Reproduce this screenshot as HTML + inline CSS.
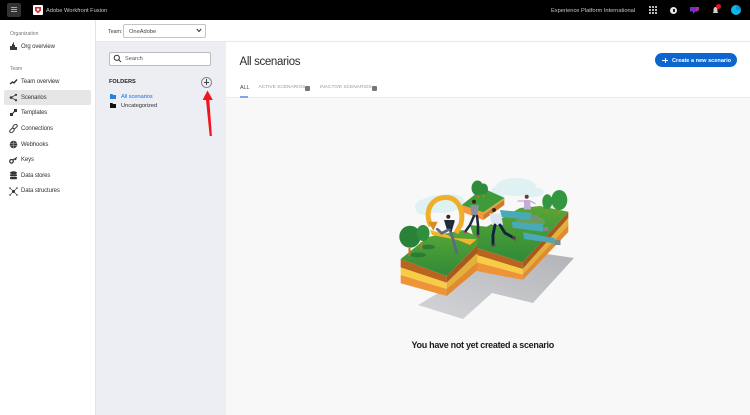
<!DOCTYPE html>
<html>
<head>
<meta charset="utf-8">
<style>
html,body{margin:0;padding:0;background:#fff;}
body{width:750px;height:415px;position:relative;overflow:hidden;font-family:"Liberation Sans",sans-serif;color:#2c2c2c;}
div,span,svg{position:absolute;}
#w{left:0;top:0;width:750px;height:415px;background:#fff;filter:blur(.3px);overflow:hidden;}
.t{white-space:nowrap;line-height:10px;margin-top:1px;}
.n{font-size:6px;letter-spacing:-.13px;left:21px;color:#333;}
.i{left:9px;width:9px;height:9px;}
</style>
</head>
<body>
<div id="w">
<!-- regions -->
<div style="left:0;top:0;width:750px;height:20px;background:#000"></div>
<div style="left:95px;top:20px;width:1px;height:395px;background:#e4e4e4"></div>
<div style="left:96px;top:41px;width:654px;height:1px;background:#e8e8e8"></div>
<div style="left:96px;top:42px;width:130px;height:373px;background:#eceef3"></div>
<div style="left:226px;top:42px;width:524px;height:55px;background:#fff"></div>
<div style="left:226px;top:97px;width:524px;height:318px;background:#f8f8f8;border-top:1px solid #ececec"></div>

<!-- top bar -->
<div style="left:7px;top:3px;width:14px;height:14px;background:#333;border-radius:2px"></div>
<div style="left:11px;top:7px;width:6px;height:1px;background:#aaa"></div>
<div style="left:11px;top:9px;width:6px;height:1px;background:#aaa"></div>
<div style="left:11px;top:11px;width:6px;height:1px;background:#aaa"></div>
<div style="left:33px;top:5px;width:10px;height:10px;background:#fff;border-radius:1px"></div>
<svg style="left:34px;top:6px" width="8" height="8" viewBox="0 0 8 8"><path d="M1 1H7V4.500L4 7.500L1 4.500Z" fill="#e3262e"/><path d="M2.800 2.500H5.200V4L4 5.200L2.800 4Z" fill="#fff"/></svg>
<div class="t" style="left:46px;top:5px;font-size:5.700px;color:#c8c8c8">Adobe Workfront Fusion</div>
<div class="t" style="left:551px;top:5px;font-size:5.700px;color:#c8c8c8">Experience Platform International</div>
<svg style="left:649px;top:6px" width="8" height="8" viewBox="0 0 8 8" fill="#bbb"><rect x="0" y="0" width="2" height="2"/><rect x="3" y="0" width="2" height="2"/><rect x="6" y="0" width="2" height="2"/><rect x="0" y="3" width="2" height="2"/><rect x="3" y="3" width="2" height="2"/><rect x="6" y="3" width="2" height="2"/><rect x="0" y="6" width="2" height="2"/><rect x="3" y="6" width="2" height="2"/><rect x="6" y="6" width="2" height="2"/></svg>
<div style="left:670px;top:7px;width:7px;height:7px;background:#e8e8e8;border-radius:50%"></div>
<div style="left:673px;top:9px;width:1.500px;height:3px;background:#222"></div>
<svg style="left:690px;top:6px" width="9" height="9" viewBox="0 0 9 9"><path d="M0 1H6V5L3 8V5.500H0Z" fill="#6a35c8"/><path d="M6 1H9V4L6 6Z" fill="#c02a8c"/></svg>
<svg style="left:712px;top:6px" width="7" height="9" viewBox="0 0 7 9"><path d="M3.500 1C5 1 5.500 2.500 5.500 4V6L6.500 7H.5L1.500 6V4C1.500 2.500 2 1 3.500 1Z" fill="#d0d0d0"/></svg>
<div style="left:716px;top:4px;width:5px;height:5px;background:#e3141e;border-radius:50%"></div>
<div style="left:731px;top:5px;width:10px;height:10px;border-radius:50%;background:#12b5e6"></div>
<div style="left:736px;top:5px;width:5px;height:5px;border-radius:0 5px 0 0;background:#0c96d8"></div>

<!-- team bar -->
<div class="t" style="left:108px;top:26px;font-size:5.500px;letter-spacing:-.15px;color:#444">Team:</div>
<div style="left:123px;top:24px;width:81px;height:12px;border:1px solid #c4c4c4;border-radius:2px;background:#fff"></div>
<div class="t" style="left:129px;top:26px;font-size:5.700px;color:#444">OneAdobe</div>
<svg style="left:196px;top:28px" width="6" height="5" viewBox="0 0 6 5"><path d="M.8 1L3 3.500L5.200 1" fill="none" stroke="#333" stroke-width="1"/></svg>

<!-- left nav -->
<div class="t" style="left:10px;top:28px;font-size:5px;color:#777">Organization</div>
<svg class="i" style="top:42px" viewBox="0 0 9 9"><path d="M1 8V4H3V2H4V0.500H5V3H6V5H8V8Z" fill="#3a3a3a"/></svg>
<div class="t n" style="top:41px">Org overview</div>
<div class="t" style="left:10px;top:63px;font-size:5px;color:#777">Team</div>
<svg class="i" style="top:77px" viewBox="0 0 9 9"><path d="M1 7L3.500 5L5 6L8 2.500" fill="none" stroke="#333" stroke-width="1.400"/></svg>
<div class="t n" style="top:76px">Team overview</div>
<div style="left:4px;top:90px;width:87px;height:15px;background:#e6e6e6;border-radius:2px"></div>
<svg class="i" style="top:93px" viewBox="0 0 9 9"><path d="M2 4.500L7 1.800M2 4.500L7 7.200" stroke="#333" stroke-width=".8" fill="none"/><circle cx="2" cy="4.500" r="1.300" fill="#333"/><circle cx="7" cy="1.800" r="1.100" fill="#333"/><circle cx="7" cy="7.200" r="1.100" fill="#333"/></svg>
<div class="t n" style="top:92px">Scenarios</div>
<svg class="i" style="top:108px" viewBox="0 0 9 9"><rect x="5" y="1" width="3" height="3" fill="#333"/><rect x="1" y="5" width="3" height="3" fill="#333"/><path d="M3 6L6 3" stroke="#333" stroke-width="1.200"/></svg>
<div class="t n" style="top:107px">Templates</div>
<svg class="i" style="top:124px" viewBox="0 0 9 9" fill="none" stroke="#444" stroke-width="1"><rect x="4.500" y="0" width="3" height="5" rx="1.500" transform="rotate(45 6 2.500)"/><rect x="1.500" y="4" width="3" height="5" rx="1.500" transform="rotate(45 3 6.500)"/></svg>
<div class="t n" style="top:123px">Connections</div>
<svg class="i" style="top:140px" viewBox="0 0 9 9"><circle cx="4.500" cy="4.500" r="3.800" fill="#3a3a3a"/><path d="M1 3.200H8M1 5.800H8M4.500 .7V8.300" stroke="#bbb" stroke-width=".5"/></svg>
<div class="t n" style="top:139px">Webhooks</div>
<svg class="i" style="top:155px" viewBox="0 0 9 9"><circle cx="2.500" cy="6.300" r="1.800" fill="none" stroke="#333" stroke-width="1.200"/><path d="M4 5L8 2.500M6 3.800L7 5" stroke="#333" stroke-width="1.200"/></svg>
<div class="t n" style="top:154px">Keys</div>
<svg class="i" style="top:171px" viewBox="0 0 9 9" fill="#333"><ellipse cx="4.500" cy="1.800" rx="3.500" ry="1.500"/><rect x="1" y="3.300" width="7" height="1.800" rx=".8"/><rect x="1" y="5.800" width="7" height="2.400" rx="1"/></svg>
<div class="t n" style="top:170px">Data stores</div>
<svg class="i" style="top:187px" viewBox="0 0 9 9"><path d="M1 1L8 8M8 1L1 8" stroke="#444" stroke-width=".7"/><circle cx="4.500" cy="4.500" r="1.500" fill="#333"/><circle cx="1" cy="1" r=".8" fill="#333"/><circle cx="8" cy="1" r=".8" fill="#333"/><circle cx="1" cy="8" r=".8" fill="#333"/><circle cx="8" cy="8" r=".8" fill="#333"/></svg>
<div class="t n" style="top:185px">Data structures</div>

<!-- folder panel -->
<div style="left:109px;top:52px;width:100px;height:12px;border:1px solid #bcbcbc;border-radius:2px;background:#fff"></div>
<svg style="left:113px;top:54px" width="9" height="9" viewBox="0 0 9 9" fill="none" stroke="#333" stroke-width="1"><circle cx="3.800" cy="3.800" r="2.600"/><path d="M5.700 5.700L8 8"/></svg>
<div class="t" style="left:125px;top:53px;font-size:5.600px;color:#555">Search</div>
<div class="t" style="left:109px;top:76px;font-size:5.600px;font-weight:bold;color:#222">FOLDERS</div>
<div style="left:201px;top:77px;width:9px;height:9px;border:1px solid #888;border-radius:50%;background:#eceef3"></div>
<div style="left:203.500px;top:81.500px;width:5.500px;height:1.200px;background:#444"></div>
<div style="left:205.700px;top:79.300px;width:1.200px;height:5.500px;background:#444"></div>
<svg style="left:110px;top:94px" width="6" height="5" viewBox="0 0 6 5"><path d="M0 0H2.500L3 1H6V5H0Z" fill="#2b7fe0"/></svg>
<div class="t" style="left:121px;top:91px;font-size:5.800px;letter-spacing:-.1px;color:#1473e6">All scenarios</div>
<svg style="left:110px;top:103px" width="6" height="5" viewBox="0 0 6 5"><path d="M0 0H2.500L3 1H6V5H0Z" fill="#111"/></svg>
<div class="t" style="left:121px;top:100px;font-size:5.800px;letter-spacing:-.1px;color:#333">Uncategorized</div>
<!-- red arrow -->
<svg style="left:200px;top:88px" width="18" height="50" viewBox="0 0 18 50"><path d="M7.500 2.500L12.800 12H9.300L11.900 48H9.700L6 12H2.600Z" fill="#f0141e"/></svg>

<!-- main header -->
<div class="t" style="left:239.500px;top:54px;font-size:11.500px;line-height:15px;letter-spacing:-.35px;color:#2c2c2c">All scenarios</div>
<div class="t" style="left:240px;top:82px;font-size:5.300px;color:#444">ALL</div>
<div style="left:240px;top:96px;width:8px;height:1.500px;background:#7fa6ee"></div>
<div class="t" style="left:258.500px;top:82px;font-size:4.800px;color:#999">ACTIVE SCENARIOS</div>
<div style="left:305px;top:85.500px;width:5px;height:5.500px;background:#777;border-radius:1px"></div>
<div class="t" style="left:320px;top:82px;font-size:4.800px;color:#999">INACTIVE SCENARIOS</div>
<div style="left:372px;top:85.500px;width:5px;height:5.500px;background:#777;border-radius:1px"></div>

<!-- CTA -->
<div style="left:654.500px;top:53px;width:82px;height:14px;background:#0d66d0;border-radius:7px"></div>
<div style="left:662px;top:59.500px;width:6px;height:1px;background:#fff"></div>
<div style="left:664.500px;top:57.500px;width:1px;height:5px;background:#fff"></div>
<div class="t" style="left:672px;top:55px;font-size:5.600px;font-weight:bold;color:#fff">Create a new scenario</div>

<!-- illustration in page coordinates -->
<svg style="left:390px;top:170px" width="200" height="160" viewBox="390 170 200 160">
<defs>
<linearGradient id="s" x1="0" y1="1" x2="1" y2="0"><stop offset="0" stop-color="#d4d5d8"/><stop offset="1" stop-color="#b3b4b8"/></linearGradient>
<linearGradient id="g" x1="0" y1="0" x2="0" y2="1"><stop offset="0" stop-color="#58a636"/><stop offset="1" stop-color="#2f8a38"/></linearGradient>
</defs>
<!-- shadow -->
<path d="M418 305L463 319L492 293L533 303L574 258L547 254L522 280L477 270Z" fill="url(#s)"/>
<!-- clouds -->
<g fill="#dff1f3">
<ellipse cx="441" cy="204" rx="20" ry="9"/><ellipse cx="427" cy="206" rx="12" ry="7"/><ellipse cx="450" cy="201" rx="14" ry="7"/><ellipse cx="425" cy="210" rx="9" ry="5"/>
<ellipse cx="516" cy="187" rx="20" ry="9"/><ellipse cx="532" cy="192" rx="12" ry="5"/><ellipse cx="500" cy="191" rx="9" ry="5"/>
</g>
<!-- back block -->
<path d="M461.700 205L483.300 212.300V220L461.700 211.700Z" fill="#f29a3c"/>
<path d="M483.300 212.300L504.300 197.700V205L483.300 220Z" fill="#cf7a2a"/>
<path d="M483.300 212.300L504.300 197.700V200L483.300 215Z" fill="#d9a94a"/>
<path d="M461.700 205L483 188.300L504.300 197.700L483.300 212.300Z" fill="#3f9a3a"/>
<rect x="477.500" y="193" width="1.500" height="5" fill="#c9741f"/><rect x="483" y="193" width="1.300" height="4" fill="#c9741f"/>
<ellipse cx="477.500" cy="188" rx="6" ry="7.500" fill="#2f8a3c"/><ellipse cx="483.500" cy="189" rx="4.500" ry="5.500" fill="#2f8a3c"/>
<!-- right block faces -->
<path d="M476.700 247.700L522.700 262.300V269L476.700 255Z" fill="#b9651f"/>
<path d="M476.700 255L522.700 269V274.500L476.700 262.300Z" fill="#f9cc45"/>
<path d="M476.700 262.300L522.700 274.500V280L476.700 271Z" fill="#ee9338"/>
<path d="M522.700 262.300L568.300 211.700V218L522.700 269Z" fill="#a85a1e"/>
<path d="M522.700 269L568.300 218V225L522.700 274.500Z" fill="#e3b13a"/>
<path d="M522.700 274.500L568.300 225V232L522.700 280Z" fill="#e28a30"/>
<!-- right block top -->
<path d="M476.700 247.700L522.700 262.300L568.300 211.700L540 206L520 208L486.700 226.700L470 225Z" fill="url(#g)"/>
<!-- left block faces -->
<path d="M400.700 259L446.700 276V282.700L400.700 267.500Z" fill="#b9651f"/>
<path d="M400.700 267.500L446.700 282.700V289L400.700 275Z" fill="#f9cc45"/>
<path d="M400.700 275L446.700 289V296L400.700 283.300Z" fill="#ee9338"/>
<path d="M446.700 276L477.300 245V253L446.700 282.700Z" fill="#a85a1e"/>
<path d="M446.700 282.700L477.300 253V262L446.700 289Z" fill="#e3b13a"/>
<path d="M446.700 289L477.300 262V270L446.700 296Z" fill="#e28a30"/>
<!-- left block top -->
<path d="M400.700 259L428 237L463 230L478 237L477.300 245L446.700 276Z" fill="url(#g)"/>
<!-- trees left -->
<ellipse cx="418" cy="255" rx="8" ry="2.500" fill="#2a7d35"/><ellipse cx="428" cy="247" rx="7" ry="2.300" fill="#2a7d35"/>
<rect x="408.500" y="248" width="2" height="8" fill="#c9741f"/><rect x="420.500" y="242" width="1.700" height="7" fill="#c9741f"/>
<ellipse cx="410" cy="236.700" rx="10.700" ry="11" fill="#2a8138"/><ellipse cx="423" cy="233" rx="6.500" ry="8" fill="#2f8f3c"/>
<!-- trees right -->
<rect x="546.500" y="207" width="1.500" height="6" fill="#c9741f"/><rect x="558.500" y="208" width="1.500" height="6" fill="#c9741f"/>
<ellipse cx="547.300" cy="201.700" rx="5" ry="7.500" fill="#34963e"/><ellipse cx="559.300" cy="200" rx="8" ry="10" fill="#34963e"/>
<!-- ring -->
<path d="M431 226C424 213 430 197.500 446 197.500C459 197.500 464 212 461 224L456 233" fill="none" stroke="#eeb02c" stroke-width="5"/>
<path d="M428.300 221.700L437.700 221.700L433.300 230.700Z" fill="#d68f1e"/>
<path d="M430 230L448 235L452 238L476.700 239.300L470 245L458 240L432 235Z" fill="#f3b52e"/>
<!-- slabs -->
<ellipse cx="530" cy="222" rx="15" ry="6" fill="#7ba26e" opacity=".6"/>
<path d="M500 210L531.700 213L530 220L501.700 217Z" fill="#48aab6"/>
<path d="M511.700 221.700L543.300 224.300L542.700 231.700L512.700 227.700Z" fill="#48aab6"/>
<path d="M523.300 232.300L555 238.300L554 243.300L524 239Z" fill="#48aab6"/>
<path d="M531.700 215H538V220H531ZM543.300 227H548.500V231H543ZM555 240H560.500V245H554Z" fill="#7d8a88"/>
<!-- people -->
<g fill="none" stroke-linecap="round">
<circle cx="448.300" cy="216.700" r="2" fill="#3a2418"/><path d="M444 220H454L452 230H447Z" fill="#1f2a3a"/>
<path d="M450 230L453.300 240L456.700 253M448 230L441.700 233.300L437.300 229.300" stroke="#5a6a80" stroke-width="2.700"/>
<path d="M454 221L451 231" stroke="#1f2a3a" stroke-width="1.500"/>
<circle cx="474" cy="201.700" r="2" fill="#3a2418"/><path d="M470 205H479L477 216H472Z" fill="#8b8fa0"/>
<path d="M474 216L470 225L465 232M477 216L478 225L478 236" stroke="#1f2a3a" stroke-width="2.500"/>
<path d="M464 232L465.500 233M477.500 235.500L479 236.500" stroke="#c2406a" stroke-width="1.800"/>
<circle cx="494" cy="210" r="2" fill="#3a2418"/><path d="M489.500 213.500H501L503 225H492Z" fill="#dfe4f2"/>
<path d="M495 225L493 235L493 245M500 225L505 233L514 238" stroke="#14233d" stroke-width="2.900"/>
<path d="M492 245.500H495M513 237L515 240" stroke="#8a3e25" stroke-width="1.500"/>
<circle cx="526.700" cy="196.700" r="2" fill="#6b3a2a"/><path d="M524 200H530L531 209.500H524Z" fill="#c3acd8"/>
<path d="M524 201L518 201M530 201L535 203.500" stroke="#c3acd8" stroke-width="1.300"/>
</g>
</svg>

<div class="t" style="left:411.500px;top:338px;font-size:9px;line-height:12px;letter-spacing:-.3px;font-weight:bold;color:#1a1a1a">You have not yet created a scenario</div>
</div>
</body>
</html>
